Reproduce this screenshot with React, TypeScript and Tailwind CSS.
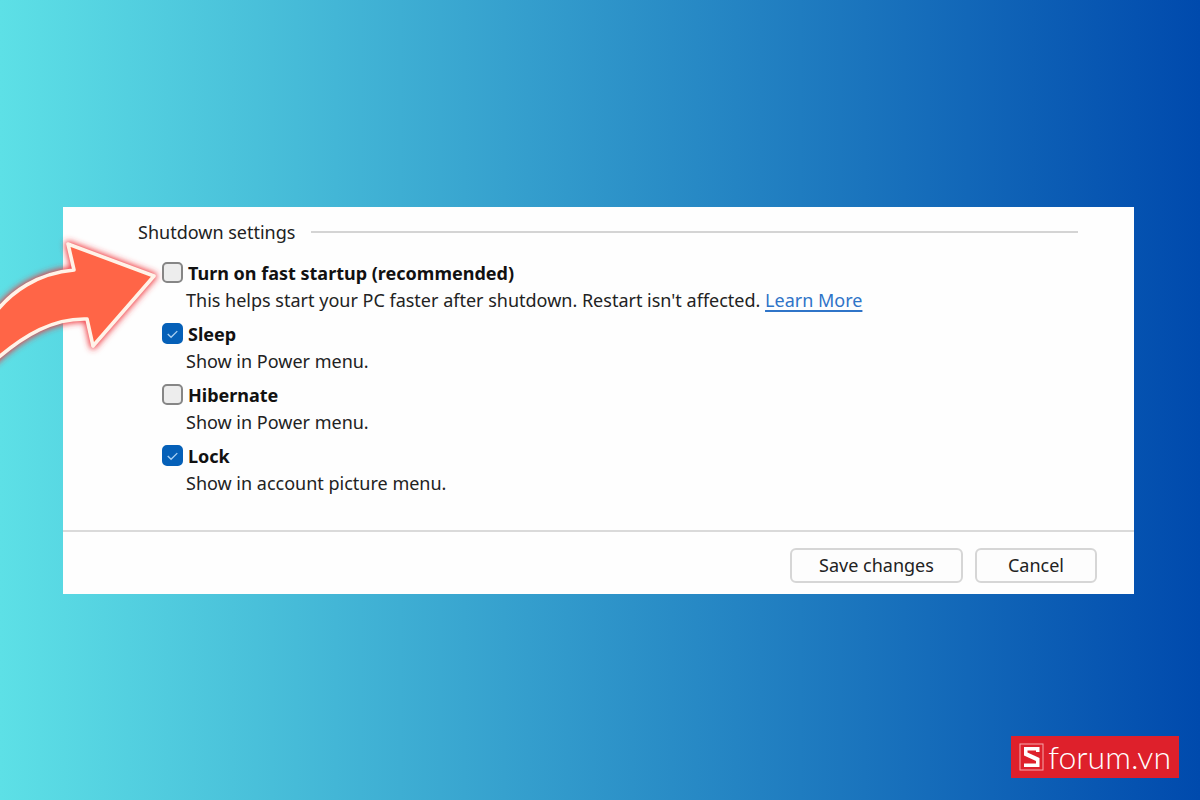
import { useState } from "react";

type Setting = {
  id: string;
  label: string;
  description: string;
  link?: string;
  checked: boolean;
};

const initialSettings: Setting[] = [
  {
    id: "fast-startup",
    label: "Turn on fast startup (recommended)",
    description: "This helps start your PC faster after shutdown. Restart isn't affected.",
    link: "Learn More",
    checked: false,
  },
  { id: "sleep", label: "Sleep", description: "Show in Power menu.", checked: true },
  { id: "hibernate", label: "Hibernate", description: "Show in Power menu.", checked: false },
  { id: "lock", label: "Lock", description: "Show in account picture menu.", checked: true },
];

function SettingRow({ setting, onToggle }: { setting: Setting; onToggle: () => void }) {
  return (
    <li>
      <div className="flex h-7 items-center gap-[5px]">
        <span className="grid size-[21px] place-items-center">
          <input
            id={setting.id}
            type="checkbox"
            checked={setting.checked}
            onChange={onToggle}
            aria-describedby={`${setting.id}-description`}
            className="peer col-start-1 row-start-1 size-[21px] appearance-none rounded-[5px] border-2 border-[#868686] bg-[#ededed] checked:border-[#0560b8] checked:bg-[#0560b8]"
          />
          <svg
            viewBox="0 0 22 22"
            aria-hidden="true"
            className="pointer-events-none invisible col-start-1 row-start-1 size-[21px] fill-none stroke-[#a9d0f2] peer-checked:visible"
          >
            <path d="M6 11.5 9.5 15 16 8.5" strokeWidth="1.4" />
          </svg>
        </span>
        <label htmlFor={setting.id} className="font-bold text-[#111]">
          {setting.label}
        </label>
      </div>
      <p id={`${setting.id}-description`} className="pl-6 leading-[27px]">
        {setting.description}
        {setting.link && (
          <>
            {" "}
            <a href="#learn-more" className="text-[#2f74c8] underline decoration-2 underline-offset-3">
              {setting.link}
            </a>
          </>
        )}
      </p>
    </li>
  );
}

function PointerArrow() {
  return (
    <svg
      viewBox="0 0 180 150"
      aria-hidden="true"
      className="pointer-events-none absolute -left-[63px] top-[13px] h-[150px] w-[180px]"
    >
      <defs>
        <filter id="glow" x="-20%" y="-20%" width="140%" height="140%">
          <feGaussianBlur stdDeviation="3" />
        </filter>
      </defs>
      <path
        d="M-10 100C10 70 40 53 74 50L68 24 154 56 93 126 87 99C55 98 25 113-10 145Z"
        fill="#f03038"
        stroke="#f03038"
        strokeWidth="6"
        strokeLinejoin="round"
        filter="url(#glow)"
      />
      <path
        d="M-10 100C10 70 40 53 74 50L68 24 154 56 93 126 87 99C55 98 25 113-10 145Z"
        fill="#ff6547"
        stroke="#fff3e8"
        strokeWidth="3.6"
        strokeLinejoin="round"
      />
    </svg>
  );
}

function BrandBadge() {
  return (
    <a
      href="#sforum"
      aria-label="Sforum.vn"
      className="absolute right-[21px] bottom-[22px] flex h-[42px] items-center gap-1 bg-[#de202b] px-2 text-white"
    >
      <svg viewBox="0 0 25 28" aria-hidden="true" className="h-7 w-[25px]">
        <rect x="1" y="1" width="23" height="26" fill="none" stroke="#f5a9ad" strokeWidth="1" />
        <path d="M20.500 4H5V12.500L17 18V20.500H5V24H20.500V15L8.500 9.500V7.500H17V9H20.500Z" fill="#fff" />
      </svg>
      <span className="font-['Lato',sans-serif] text-[32px] leading-10 font-light">forum.vn</span>
    </a>
  );
}

export default function App() {
  const [settings, setSettings] = useState(initialSettings);

  const toggle = (id: string) =>
    setSettings((all) => all.map((s) => (s.id === id ? { ...s, checked: !s.checked } : s)));

  return (
    <main className="relative flex min-h-screen flex-col justify-center overflow-hidden bg-linear-to-r/srgb from-[#5de0e6] to-[#004aad] pr-[66px] pl-[63px] font-['Noto_Sans','Open_Sans',sans-serif] text-[18px] leading-7 text-[#222]">
      <form className="relative bg-[#fefefe]" onSubmit={(e) => e.preventDefault()}>
        <section className="pt-[11px] pr-14 pb-[33px] pl-[75px]">
          <div className="flex items-center gap-4">
            <h1>Shutdown settings</h1>
            <div className="h-0.5 flex-1 bg-[#d4d4d4]" />
          </div>
          <ul className="mt-[13px] flex flex-col gap-[6px] pl-6">
            {settings.map((s) => (
              <SettingRow key={s.id} setting={s} onToggle={() => toggle(s.id)} />
            ))}
          </ul>
        </section>
        <footer className="flex justify-end gap-3 border-t-2 border-[#dadada] pt-4 pr-[37px] pb-[11px]">
          <button
            type="submit"
            className="h-[35px] w-[173px] rounded-md border-2 border-[#d6d6d6] bg-[#fdfdfd]"
          >
            Save changes
          </button>
          <button
            type="button"
            className="h-[35px] w-[122px] rounded-md border-2 border-[#d6d6d6] bg-[#fdfdfd]"
          >
            Cancel
          </button>
        </footer>
        <PointerArrow />
      </form>
      <BrandBadge />
    </main>
  );
}
